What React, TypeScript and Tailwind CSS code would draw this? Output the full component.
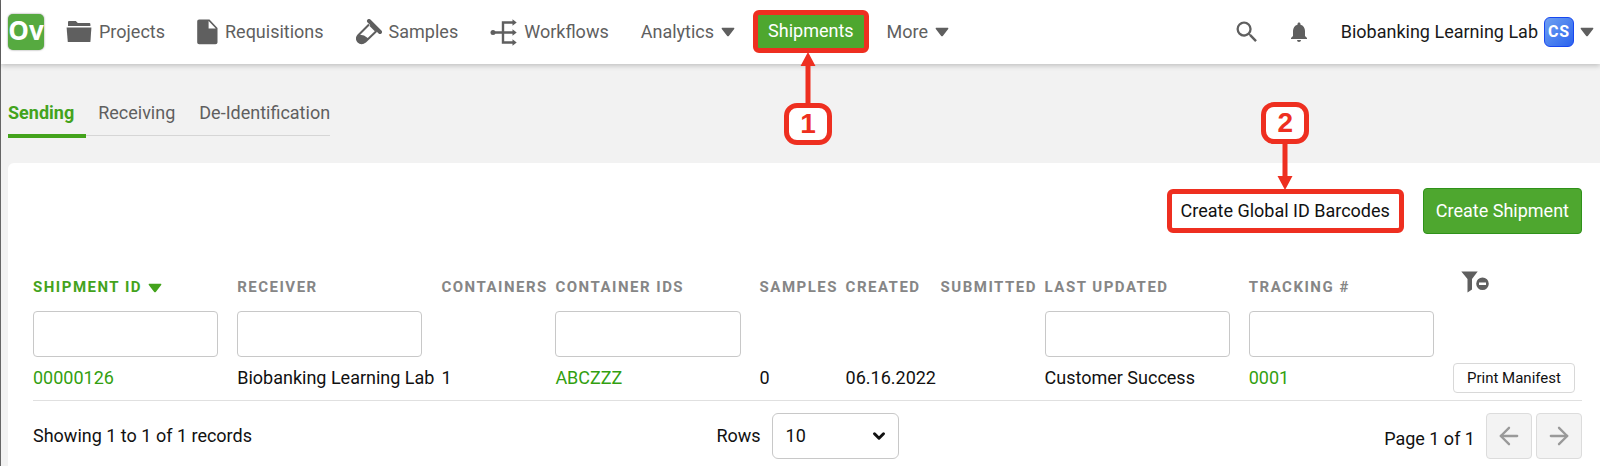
import { ReactNode, useState } from "react";
import { LuArrowLeft, LuArrowRight, LuChevronDown } from "react-icons/lu";
import { MdNotifications, MdSearch } from "react-icons/md";

const columns = [
  { name: "Shipment ID", width: "", filter: true, sorted: true },
  { name: "Receiver", width: "", filter: true },
  { name: "Containers", width: "w-[114px]" },
  { name: "Container IDs", width: "", filter: true },
  { name: "Samples", width: "w-[86px]" },
  { name: "Created", width: "w-[95px]" },
  { name: "Submitted", width: "w-[104px]" },
  { name: "Last Updated", width: "", filter: true },
  { name: "Tracking #", width: "", filter: true },
];

const shipments = [
  {
    id: "00000126",
    receiver: "Biobanking Learning Lab",
    containers: 1,
    containerIds: "ABCZZZ",
    samples: 0,
    created: "06.16.2022",
    submitted: "",
    updatedBy: "Customer Success",
    tracking: "0001",
  },
];

function Caret({ className = "" }: { className?: string }) {
  return (
    <svg viewBox="0 0 14 10" className={`h-[10px] w-[14px] shrink-0 ${className}`} fill="currentColor" aria-hidden="true">
      <path d="M1.4.8h11.2c.7 0 1 .7.6 1.2L7.8 8.900c-.4.500-1.200.500-1.600 0L.8 2C.4 1.500.7.8 1.400.8z" />
    </svg>
  );
}

function FolderIcon() {
  return (
    <svg viewBox="0 0 26 26" className="h-[26px] w-[26px]" fill="currentColor" aria-hidden="true">
      <path d="M2 7V3.2C2 2.5 2.5 2 3.2 2h6.6l2 2h11.4c.7 0 1.2.5 1.2 1.2V7z" />
      <path d="M.6 8.4h24.8L24.4 23H1.8z" />
    </svg>
  );
}

function FileIcon() {
  return (
    <svg viewBox="0 0 21 26" className="h-[26px] w-[21px]" fill="currentColor" aria-hidden="true">
      <path
        fillRule="evenodd"
        d="M2.2.5h10.3L20.5 9v14.2c0 1.2-.8 2-2 2H2.2c-1.2 0-2-.8-2-2V2.5c0-1.2.8-2 2-2zM11.6 2v7.4h7.2z"
      />
    </svg>
  );
}

function TubeIcon() {
  return (
    <svg viewBox="0 0 26 26" className="h-[26px] w-[26px]" aria-hidden="true">
      <path d="M13 5.5L2.3 16.2a4.7 4.7 0 0 0 6.7 6.7L20.5 12" fill="none" stroke="currentColor" strokeWidth="2" />
      <path d="M3 15.5l5 1 4.5 3L9 23a4.7 4.7 0 0 1-6.7-6.7z" fill="currentColor" />
      <path d="M13 2l11 11" stroke="currentColor" strokeWidth="4" strokeLinecap="round" />
      <path d="M15 5.5l5.5 5.5" stroke="currentColor" strokeWidth="4" />
    </svg>
  );
}

function WorkflowIcon() {
  return (
    <svg viewBox="0 0 27 27" className="h-[27px] w-[27px]" fill="none" stroke="currentColor" strokeWidth="2.4" aria-hidden="true">
      <path d="M3 13.5h21M24 3.5H13v20h11" />
      <circle cx="3" cy="13.5" r="2.5" fill="currentColor" stroke="none" />
      <path d="M22.5.3l4.2 3.2-4.2 3.2zM22.5 10.3l4.2 3.2-4.2 3.2zM22.5 20.3l4.2 3.2-4.2 3.2z" fill="currentColor" stroke="none" />
    </svg>
  );
}

function ClearFilterIcon() {
  return (
    <svg viewBox="0 0 28 22" className="h-[22px] w-[28px]" fill="currentColor" aria-hidden="true">
      <path d="M.3.5h16.4L11 8v10.5L6.5 21.5V8z" />
      <path fillRule="evenodd" d="M21.5 6.5a6.3 6.3 0 1 1 0 12.6 6.3 6.3 0 0 1 0-12.6zM18 11.5v2.6h7v-2.6z" />
    </svg>
  );
}

function NavLink({ icon, children }: { icon?: ReactNode; children: ReactNode }) {
  return (
    <a href="#" className="flex items-center gap-[7px]">
      {icon}
      {children}
    </a>
  );
}

///numbered marker that lies over the page
function Marker({ step, up = false, className }: { step: number; up?: boolean; className: string }) {
  return (
    <div className={`pointer-events-none absolute z-10 flex items-center text-[#ee2f20] ${up ? "flex-col" : "flex-col-reverse"} ${className}`}>
      <svg
        viewBox="0 0 16 52"
        className={up ? "h-[51px] w-4" : "h-[46px] w-4 rotate-180"}
        preserveAspectRatio="xMidYMin slice"
        fill="currentColor"
        aria-hidden="true"
      >
        <path d="M8 0l7.5 14H10.5v38h-5V14H.5z" />
      </svg>
      <span className="flex h-[42px] w-12 items-center justify-center rounded-[13px] border-[5px] border-current bg-white text-[28px] leading-none font-bold [font-family:'Liberation_Sans',Arial,sans-serif]">
        {step}
      </span>
    </div>
  );
}

function Header() {
  return (
    <header className="relative z-[1] flex h-16 items-center justify-between bg-white pr-[6px] pl-[7px] shadow-[0_2px_5px_rgba(0,0,0,0.2)]">
      <nav className="flex items-center text-lg text-[#5f5f5f]">
        <a
          href="#"
          className="mr-[22px] flex h-9 w-9 items-center justify-center rounded-[5px] bg-[#56aa40] pb-1 text-[26px] leading-none font-bold text-white shadow-[0_0_2px_rgba(0,0,0,0.5)] [font-family:'Open_Sans',sans-serif]"
        >
          Ov
        </a>
        <div className="flex items-center gap-8">
          <NavLink icon={<FolderIcon />}>Projects</NavLink>
          <NavLink icon={<FileIcon />}>Requisitions</NavLink>
          <NavLink icon={<TubeIcon />}>Samples</NavLink>
          <NavLink icon={<WorkflowIcon />}>Workflows</NavLink>
          <NavLink>
            Analytics <Caret />
          </NavLink>
        </div>
        <div className="relative mr-[18px] ml-[18px] pb-[2px]">
          <a
            href="#"
            className="flex h-[43px] items-center rounded-md border-[5px] border-[#ee2f20] bg-[#4ea72f] px-[10px] text-white"
          >
            Shipments
          </a>
          <Marker step={1} up className="top-[42px] left-[31px]" />
        </div>
        <NavLink>
          More <Caret />
        </NavLink>
      </nav>
      <div className="flex items-center text-lg text-[#1a1a1a]">
        <button aria-label="Search" className="mr-[26px] text-[#5f5f5f]">
          <MdSearch className="h-7 w-7" />
        </button>
        <button aria-label="Notifications" className="mr-[30px] text-[#5f5f5f]">
          <MdNotifications className="h-6 w-6" />
        </button>
        <button className="flex items-center gap-[6px]">
          Biobanking Learning Lab
          <span className="flex h-[30px] w-[30px] items-center justify-center rounded-md border border-[#1747f0] bg-linear-to-br from-[#6f9ff0] to-[#2c62ee] text-base font-bold tracking-wider text-white">
            CS
          </span>
          <Caret className="text-[#5f5f5f]" />
        </button>
      </div>
    </header>
  );
}

function Tabs() {
  return (
    <nav className="flex pt-[34px] pb-[25px] pl-[7px] text-lg leading-[30px] text-[#5f5f5f]">
      <a href="#" className="h-10 border-b-4 border-[#43a31c] pr-3 font-bold text-[#43a31c]">
        Sending
      </a>
      <a href="#" className="h-[38px] border-b border-[#d6d6d6] px-3">
        Receiving
      </a>
      <a href="#" className="h-[38px] border-b border-[#d6d6d6] pl-3">
        De-Identification
      </a>
    </nav>
  );
}

function ShipmentTable() {
  return (
    <table className="mt-[34px] w-full table-fixed text-left text-lg whitespace-nowrap">
      <thead className="text-[15px] tracking-widest text-[#868686] uppercase">
        <tr>
          {columns.map((column) => (
            <th key={column.name} className={`h-9 p-0 pt-1 align-middle font-bold ${column.width}`}>
              {column.sorted ? (
                <button className="flex items-center gap-[6px] tracking-widest text-[#43a31c] uppercase">
                  {column.name} <Caret />
                </button>
              ) : (
                column.name
              )}
            </th>
          ))}
          <th className="w-[129px] p-0 pb-2 pl-2">
            <button aria-label="Clear filters" className="block text-[#5f5f5f]">
              <ClearFilterIcon />
            </button>
          </th>
        </tr>
        <tr>
          {columns.map((column) => (
            <td key={column.name} className="h-[53px] p-0 pr-[19px] align-bottom">
              {column.filter ? (
                <input
                  type="text"
                  aria-label={column.name}
                  className="block h-[46px] w-full rounded border border-[#c8c8c8] bg-white px-3"
                />
              ) : null}
            </td>
          ))}
          <td></td>
        </tr>
      </thead>
      <tbody>
        {shipments.map((shipment) => (
          <tr key={shipment.id} className="h-[43px] border-b border-[#e0e0e0]">
            <td>
              <a href="#" className="text-[#339f10]">
                {shipment.id}
              </a>
            </td>
            <td>{shipment.receiver}</td>
            <td>{shipment.containers}</td>
            <td>
              <a href="#" className="text-[#339f10]">
                {shipment.containerIds}
              </a>
            </td>
            <td>{shipment.samples}</td>
            <td>{shipment.created}</td>
            <td>{shipment.submitted}</td>
            <td>{shipment.updatedBy}</td>
            <td>
              <a href="#" className="text-[#339f10]">
                {shipment.tracking}
              </a>
            </td>
            <td>
              <button className="block h-[30px] rounded border border-[#d8d8d8] px-[13px] text-[15px]">Print Manifest</button>
            </td>
          </tr>
        ))}
      </tbody>
    </table>
  );
}

function Pagination() {
  const [rows, setRows] = useState("10");

  return (
    <div className="grid grid-cols-3 items-center pt-3 pb-[7px] text-lg">
      <div>Showing 1 to 1 of 1 records</div>
      <div className="flex items-center justify-center gap-[11px]">
        <label htmlFor="rows">Rows</label>
        <div className="relative">
          <select
            id="rows"
            value={rows}
            onChange={(event) => setRows(event.currentTarget.value)}
            className="block h-[46px] w-[127px] appearance-none rounded-md border border-[#c8c8c8] bg-white px-[13px]"
          >
            <option>10</option>
            <option>25</option>
            <option>50</option>
          </select>
          <LuChevronDown className="pointer-events-none absolute top-[14px] right-[11px] h-[18px] w-[18px] stroke-[4]" />
        </div>
      </div>
      <div className="flex items-center justify-end gap-1">
        <span className="pt-[6px] pr-[7px]">Page 1 of 1</span>
        <button aria-label="Previous page" className="flex h-[46px] w-[46px] items-center justify-center rounded border border-[#dcdcdc] bg-[#f3f3f3] text-[#999]">
          <LuArrowLeft className="h-7 w-7" />
        </button>
        <button aria-label="Next page" className="flex h-[46px] w-[46px] items-center justify-center rounded border border-[#dcdcdc] bg-[#f3f3f3] text-[#999]">
          <LuArrowRight className="h-7 w-7" />
        </button>
      </div>
    </div>
  );
}

export default function App() {
  return (
    <div className="flex min-h-screen flex-col border-l border-[#666] bg-[#f2f2f2] font-[Roboto,sans-serif] text-[#111]">
      <Header />
      <Tabs />
      <main className="ml-[7px] flex-1 rounded-tl-md bg-white pt-[25px] pr-[18px] pl-[25px]">
        <div className="flex items-center justify-end gap-[19px] text-lg">
          <div className="relative">
            <button className="block h-11 rounded-md border-[5px] border-[#ee2f20] bg-white px-[9px]">
              Create Global ID Barcodes
            </button>
            <Marker step={2} className="bottom-[43px] left-1/2 -translate-x-1/2" />
          </div>
          <button className="h-[46px] rounded border border-[#2f921a] bg-[#4ea72f] px-3 text-white">
            Create Shipment
          </button>
        </div>
        <ShipmentTable />
        <Pagination />
      </main>
    </div>
  );
}
